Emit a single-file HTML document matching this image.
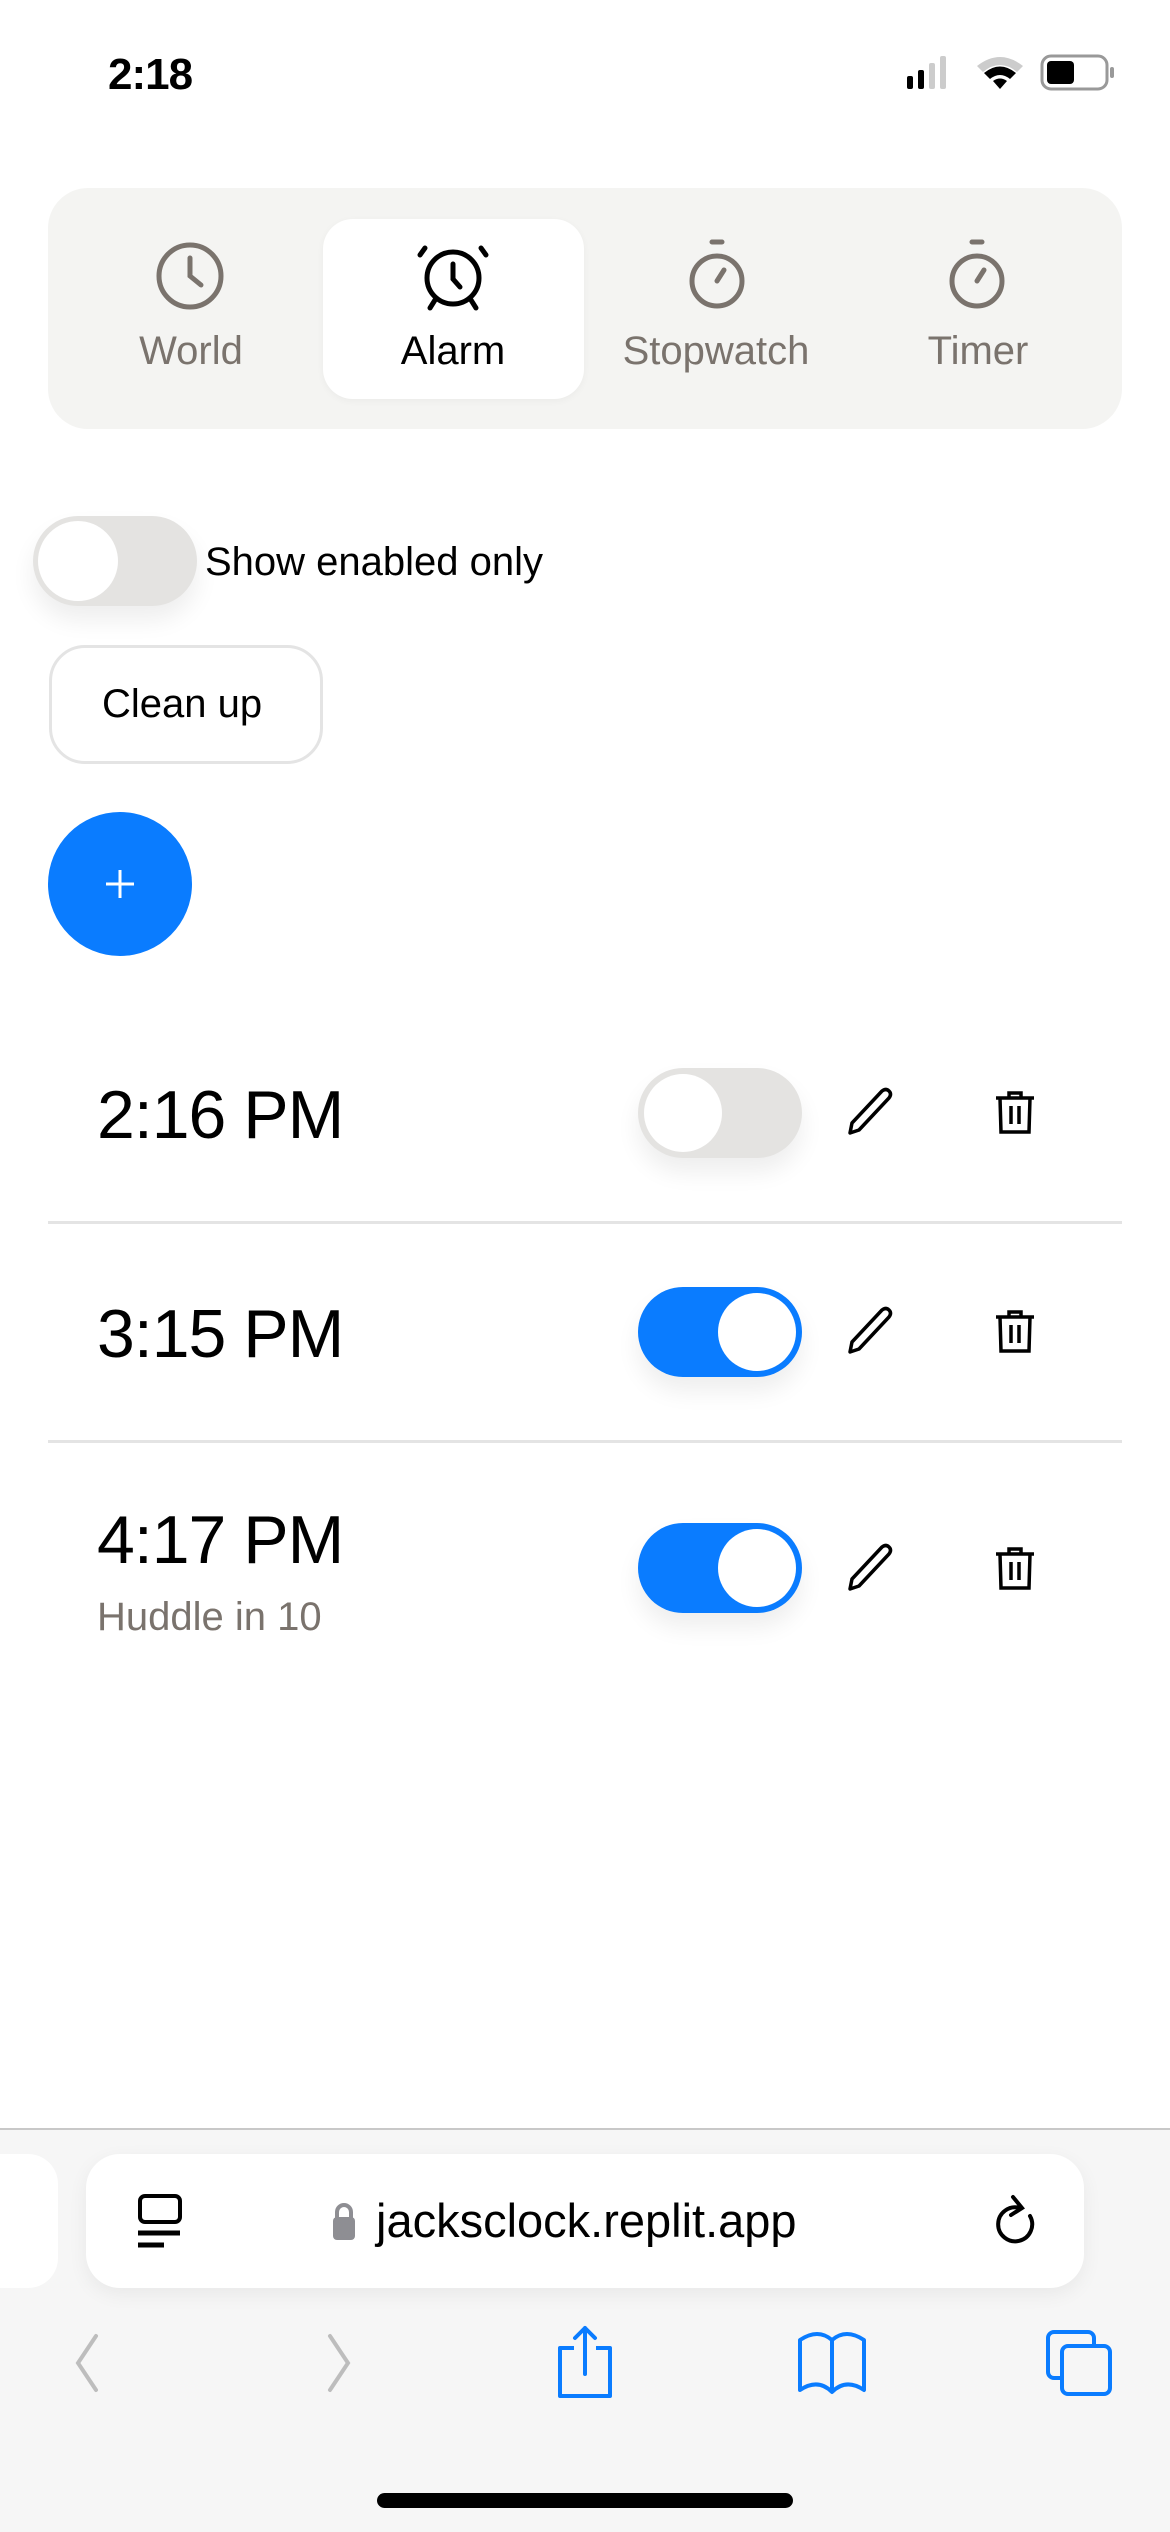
<!DOCTYPE html>
<html><head><meta charset="utf-8"><style>
*{margin:0;padding:0;box-sizing:border-box}
body{width:1170px;height:2532px;background:#fff;position:relative;overflow:hidden;font-family:"Liberation Sans",sans-serif;color:#000}
.a{position:absolute}
.seg{left:48px;top:188px;width:1074px;height:241px;background:#f4f4f2;border-radius:40px}
.pill{left:323px;top:219px;width:261px;height:180px;background:#fff;border-radius:30px;box-shadow:0 2px 8px rgba(0,0,0,.04)}
.lbl{top:329px;font-size:40px;color:#7a736d;text-align:center;width:260px}
.tog{width:164px;height:90px;border-radius:45px;background:#e4e3e1;box-shadow:0 14px 24px rgba(0,0,0,.07)}
.tog .k{position:absolute;top:6px;left:6px;width:78px;height:78px;border-radius:50%;background:#fff}
.tog.on{background:#0a7cff}
.tog.on .k{left:80px}
.time{left:97px;font-size:68px;font-weight:300;letter-spacing:-1px}
.div{left:48px;width:1074px;height:3px;background:#e4e4e4}
</style></head><body>
<div class="a" style="left:108px;top:50px;font-size:44px;font-weight:bold;letter-spacing:-1px">2:18</div>
<svg class="a" style="left:905px;top:54px" width="210" height="38" viewBox="0 0 210 38">
<rect x="2" y="22" width="6" height="13" rx="2" fill="#000"/><rect x="13" y="16" width="6" height="19" rx="2" fill="#000"/><rect x="24" y="9" width="6" height="26" rx="2" fill="#ccc"/><rect x="35" y="2" width="6" height="33" rx="2" fill="#ccc"/>
<path d="M72 12 Q95 -6 118 12 L112 18 Q95 4 78 18Z" fill="#ccc"/><path d="M79 19 Q95 6 111 19 L105 25 Q95 17 85 25Z" fill="#000"/><path d="M88 27 Q95 22 102 27 L95 35Z" fill="#000"/>
<rect x="137" y="2" width="65" height="33" rx="9" fill="none" stroke="#999" stroke-width="3"/><rect x="142" y="7" width="27" height="23" rx="4" fill="#000"/><rect x="205" y="13" width="4" height="11" rx="2" fill="#999"/>
</svg>
<div class="a seg"></div>
<div class="a pill"></div>
<svg class="a" style="left:150px;top:236px" width="80" height="80" viewBox="0 0 80 80" fill="none" stroke="#7a736d" stroke-width="5" stroke-linecap="round"><circle cx="40" cy="40" r="31"/><path d="M40 22V40L51 49"/></svg>
<svg class="a" style="left:413px;top:236px" width="80" height="80" viewBox="0 0 80 80" fill="none" stroke="#000" stroke-width="5" stroke-linecap="round"><circle cx="40" cy="42" r="26"/><path d="M40 28V43L47 51M12 12L7 19M68 12L73 19M22 64L17 72M58 64L63 72"/></svg>
<svg class="a" style="left:677px;top:236px" width="80" height="80" viewBox="0 0 80 80" fill="none" stroke="#7a736d" stroke-width="5" stroke-linecap="round"><circle cx="40" cy="45" r="25"/><path d="M35 6H45M40 45L47 34"/></svg>
<svg class="a" style="left:937px;top:236px" width="80" height="80" viewBox="0 0 80 80" fill="none" stroke="#7a736d" stroke-width="5" stroke-linecap="round"><circle cx="40" cy="45" r="25"/><path d="M35 6H45M40 45L47 34"/></svg>
<div class="a lbl" style="left:61px">World</div>
<div class="a lbl" style="left:323px;color:#000">Alarm</div>
<div class="a lbl" style="left:586px">Stopwatch</div>
<div class="a lbl" style="left:848px">Timer</div>

<div class="a tog" style="left:33px;top:516px"><div class="k" style="left:5px;top:5px;width:80px;height:80px"></div></div>
<div class="a" style="left:205px;top:540px;font-size:40px">Show enabled only</div>
<div class="a" style="left:49px;top:645px;width:274px;height:119px;border:3px solid #e4e4e4;border-radius:36px;font-size:40px;line-height:113px;padding-left:50px">Clean up</div>
<div class="a" style="left:48px;top:812px;width:144px;height:144px;border-radius:50%;background:#0a7cff"></div>
<svg class="a" style="left:100px;top:864px" width="40" height="40"><path d="M20 6V34M6 20H34" stroke="#fff" stroke-width="3"/></svg>

<div class="a time" style="top:1076px">2:16 PM</div>
<div class="a tog" style="left:638px;top:1068px"></div><div class="a" style="left:644px;top:1074px;width:78px;height:78px;border-radius:50%;background:#fff"></div>
<div class="a div" style="top:1221px"></div>
<div class="a time" style="top:1295px">3:15 PM</div>
<div class="a tog on" style="left:638px;top:1287px"><div class="k"></div></div>
<div class="a div" style="top:1440px"></div>
<div class="a time" style="top:1501px">4:17 PM</div>
<div class="a tog on" style="left:638px;top:1523px"><div class="k"></div></div>
<div class="a" style="left:97px;top:1595px;font-size:40px;color:#7a736d">Huddle in 10</div>

<svg class="a" style="left:840px;top:1085px" width="60" height="55" viewBox="0 0 60 55" fill="none" stroke="#000" stroke-width="3.5" stroke-linejoin="round"><path d="M10 48L12 38L42 6Q46 3 49 6Q52 9 49 13L19 45Z"/></svg>
<svg class="a" style="left:990px;top:1088px" width="50" height="50" viewBox="0 0 50 50" fill="none" stroke="#000" stroke-width="3.5"><path d="M6 10H44M19 10V5H31V10M10 10L11 44H39L40 10M21 18V36M29 18V36"/></svg>
<svg class="a" style="left:840px;top:1304px" width="60" height="55" viewBox="0 0 60 55" fill="none" stroke="#000" stroke-width="3.5" stroke-linejoin="round"><path d="M10 48L12 38L42 6Q46 3 49 6Q52 9 49 13L19 45Z"/></svg>
<svg class="a" style="left:990px;top:1307px" width="50" height="50" viewBox="0 0 50 50" fill="none" stroke="#000" stroke-width="3.5"><path d="M6 10H44M19 10V5H31V10M10 10L11 44H39L40 10M21 18V36M29 18V36"/></svg>
<svg class="a" style="left:840px;top:1541px" width="60" height="55" viewBox="0 0 60 55" fill="none" stroke="#000" stroke-width="3.5" stroke-linejoin="round"><path d="M10 48L12 38L42 6Q46 3 49 6Q52 9 49 13L19 45Z"/></svg>
<svg class="a" style="left:990px;top:1544px" width="50" height="50" viewBox="0 0 50 50" fill="none" stroke="#000" stroke-width="3.5"><path d="M6 10H44M19 10V5H31V10M10 10L11 44H39L40 10M21 18V36M29 18V36"/></svg>

<div class="a" style="left:0;top:2128px;width:1170px;height:404px;background:#f6f6f6;border-top:2px solid #c8c8c8"></div>
<div class="a" style="left:-40px;top:2154px;width:98px;height:134px;background:#fff;border-radius:30px"></div>
<div class="a" style="left:86px;top:2154px;width:998px;height:134px;background:#fff;border-radius:34px;box-shadow:0 6px 20px rgba(0,0,0,.06)"></div>
<svg class="a" style="left:134px;top:2190px" width="52" height="60" viewBox="0 0 52 60" fill="none" stroke="#000" stroke-width="4"><rect x="6" y="6" width="40" height="26" rx="5"/><path d="M4 43H46M4 55H30" stroke-width="5"/></svg>
<svg class="a" style="left:330px;top:2200px" width="28" height="42"><path d="M7 18V12A7 7 0 0 1 21 12V18" fill="none" stroke="#8e8e93" stroke-width="4"/><rect x="3" y="17" width="22" height="23" rx="4" fill="#8e8e93"/></svg>
<div class="a" style="left:376px;top:2193px;font-size:47px">jacksclock.replit.app</div>
<svg class="a" style="left:990px;top:2190px" width="50" height="60" viewBox="0 0 50 60" fill="none" stroke="#000" stroke-width="4" stroke-linecap="round"><path d="M30 18A17 17 0 1 0 40 26"/><path d="M23 7L32 18L21 25"/></svg>

<svg class="a" style="left:66px;top:2330px" width="40" height="66"><path d="M30 6L12 33L30 60" fill="none" stroke="#bdbdbd" stroke-width="4" stroke-linecap="round"/></svg>
<svg class="a" style="left:320px;top:2330px" width="40" height="66"><path d="M10 6L28 33L10 60" fill="none" stroke="#bdbdbd" stroke-width="4" stroke-linecap="round"/></svg>
<svg class="a" style="left:552px;top:2324px" width="66" height="76" viewBox="0 0 66 76" fill="none" stroke="#0a7cff" stroke-width="4" stroke-linejoin="round"><path d="M22 24H8V72H58V24H44"/><path d="M33 50V4M23 14L33 4L43 14" stroke-linecap="round"/></svg>
<svg class="a" style="left:794px;top:2330px" width="76" height="66" viewBox="0 0 76 66" fill="none" stroke="#0a7cff" stroke-width="4" stroke-linejoin="round"><path d="M38 10Q24 -2 6 10V60Q24 48 38 62Q52 48 70 60V10Q52 -2 38 10V60"/></svg>
<svg class="a" style="left:1044px;top:2328px" width="72" height="72" viewBox="0 0 72 72" fill="none" stroke="#0a7cff" stroke-width="4"><rect x="4" y="4" width="46" height="46" rx="6"/><rect x="18" y="18" width="48" height="48" rx="6" fill="#f6f6f6"/></svg>
<div class="a" style="left:377px;top:2493px;width:416px;height:15px;border-radius:8px;background:#000"></div>
</body></html>
